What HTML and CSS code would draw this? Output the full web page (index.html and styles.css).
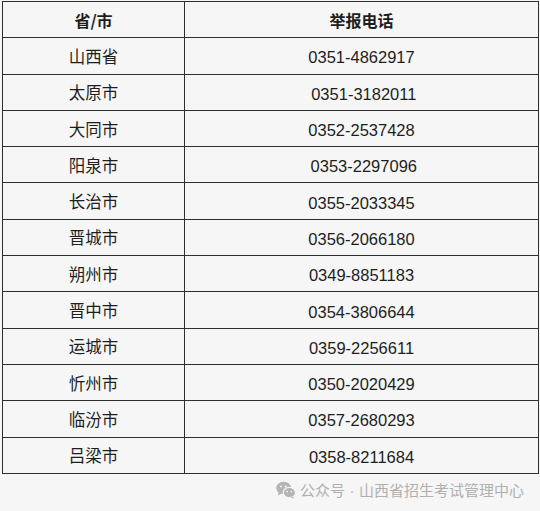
FILE: index.html
```html
<!DOCTYPE html>
<html lang="zh-CN">
<head>
<meta charset="utf-8">
<title>举报电话</title>
<link rel="stylesheet" href="styles.css">
</head>
<body>
<div class="page">
  <table class="phones">
    <colgroup><col class="c1"><col class="c2"></colgroup>
    <thead>
      <tr><th>省/市</th><th>举报电话</th></tr>
    </thead>
    <tbody>
      <tr><td>山西省</td><td class="num">0351-4862917</td></tr>
      <tr><td>太原市</td><td class="num">&nbsp;0351-3182011</td></tr>
      <tr><td>大同市</td><td class="num">0352-2537428</td></tr>
      <tr><td>阳泉市</td><td class="num">&nbsp;0353-2297096</td></tr>
      <tr><td>长治市</td><td class="num">0355-2033345</td></tr>
      <tr><td>晋城市</td><td class="num">0356-2066180</td></tr>
      <tr><td>朔州市</td><td class="num">0349-8851183</td></tr>
      <tr><td>晋中市</td><td class="num">0354-3806644</td></tr>
      <tr><td>运城市</td><td class="num">0359-2256611</td></tr>
      <tr><td>忻州市</td><td class="num">0350-2020429</td></tr>
      <tr><td>临汾市</td><td class="num">0357-2680293</td></tr>
      <tr><td>吕梁市</td><td class="num">0358-8211684</td></tr>
    </tbody>
  </table>
  <div class="mark">
    <svg class="wx" viewBox="0 0 20 18" width="20" height="18" aria-hidden="true">
      <ellipse cx="7.6" cy="7" rx="7.4" ry="6.2" fill="#b5b5b5"/>
      <path d="M2.6 11.5 L1.8 14.6 L5.6 12.6 Z" fill="#b5b5b5"/>
      <ellipse cx="13.4" cy="11.6" rx="6.2" ry="5.2" fill="#b5b5b5" stroke="#f5f6f5" stroke-width="1.2"/>
      <path d="M17 15.4 L18.2 17.8 L14.8 16.4 Z" fill="#b5b5b5"/>
      <circle cx="5" cy="5.4" r="1" fill="#f5f6f5"/>
      <circle cx="9.8" cy="5.4" r="1" fill="#f5f6f5"/>
      <circle cx="11.2" cy="10.6" r="0.85" fill="#f5f6f5"/>
      <circle cx="15.4" cy="10.6" r="0.85" fill="#f5f6f5"/>
    </svg>
    <span class="mark-text">公众号<span class="dot">·</span>山西省招生考试管理中心</span>
  </div>
</div>
</body>
</html>
```
FILE: styles.css
```css
html, body {
  margin: 0;
  padding: 0;
  background: #f5f6f5;
}
.page {
  padding: 1px 0 0 2px;
  width: 540px;
  height: 511px;
  box-sizing: border-box;
  font-family: "Liberation Sans", "Noto Sans CJK SC", sans-serif;
  color: #1e1e1e;
}
.phones {
  border-collapse: collapse;
  width: 536px;
  table-layout: fixed;
  background: #f5f6f5;
  font-size: 16.5px;
}
.c1 { width: 182px; }
.c2 { width: 354px; }
.phones th,
.phones td {
  border: 1px solid #2e2e2e;
  height: 35.3px;
  padding: 0;
  text-align: center;
  vertical-align: middle;
  font-family: "Noto Sans CJK SC", sans-serif;
  font-weight: 400;
  line-height: 20px;
}
.phones th {
  font-weight: 700;
  font-size: 16px;
}
.phones td.num {
  font-family: "Liberation Sans", "Noto Sans CJK SC", sans-serif;
  font-size: 16.5px;
  height: 32.3px;
  padding-top: 3px;
}
.mark {
  display: flex;
  align-items: center;
  gap: 4px;
  margin: 6px 0 0 274px;
  color: #b0b0b0;
  font-family: "Noto Sans CJK SC", sans-serif;
  font-size: 15px;
  line-height: 20px;
}
.wx {
  flex: none;
}
.mark-text {
  white-space: nowrap;
}
.dot {
  font-family: "Liberation Sans", sans-serif;
  margin: 0 4.5px;
}
```
